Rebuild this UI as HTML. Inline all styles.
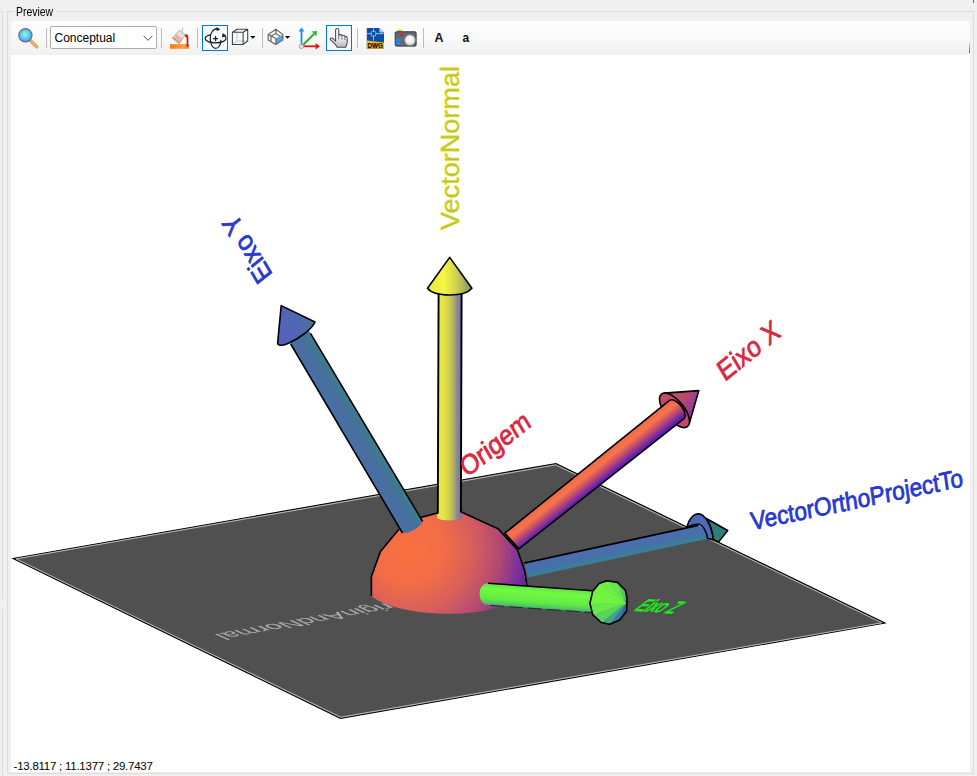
<!DOCTYPE html>
<html><head><meta charset="utf-8"><title>Preview</title>
<style>
html,body{margin:0;padding:0}
body{width:977px;height:776px;background:#f0f0f0;position:relative;overflow:hidden;font-family:"Liberation Sans",sans-serif;font-size:12px;color:#000}
.abs{position:absolute}
#grp{left:7px;top:11px;width:965px;height:761px;border:1px solid #dcdcdc}
#lbl{left:14px;top:4px;width:40px;height:16px;background:#f0f0f0;line-height:16px;padding-left:2px;font-size:12px;white-space:nowrap}
#lbl span{display:inline-block;transform:scaleX(.868);transform-origin:0 50%}
#lg1{left:-5px;top:11px;width:6px;height:586px;border:1px solid #dcdcdc}
#lg2{left:-5px;top:609px;width:6px;height:180px;border:1px solid #dcdcdc}
#tb{left:11px;top:21px;width:959px;height:34px;background:linear-gradient(#fdfdfd,#f9f9f9 50%,#f0f0f0);border-radius:3px 4px 0 0}
#cv{left:11px;top:55px;width:959px;height:717px;background:#fff}
.sep{width:1px;height:20px;top:28px;background:#bdbdbd}
#combo{left:50px;top:26px;width:105px;height:21px;border:1px solid #adadad;background:#fff;border-radius:2px}
#combo span{position:absolute;left:3.5px;top:4px;font-size:12px;line-height:14px}
.btn{width:24px;height:24px;top:25px;border:1px solid #0078d7;background:#f6f9fd}
#coord{left:13.6px;top:758.6px;font-size:11.5px;line-height:14px;letter-spacing:-0.25px;white-space:nowrap}
svg text{font-family:"Liberation Sans",sans-serif}
</style></head><body>
<div class="abs" id="lg1"></div><div class="abs" id="lg2"></div>
<div class="abs" id="grp"></div>
<div class="abs" id="lbl"><span>Preview</span></div>
<div class="abs" id="tb"></div>
<div class="abs" id="cv"></div>
<div class="abs sep" style="left:46px"></div>
<div class="abs" id="combo"><span>Conceptual</span></div>
<div class="abs sep" style="left:161px"></div>
<div class="abs sep" style="left:197px"></div>
<div class="abs btn" style="left:202px"></div>
<div class="abs sep" style="left:262px"></div>
<div class="abs btn" style="left:326px"></div>
<div class="abs sep" style="left:357px"></div>
<div class="abs sep" style="left:423px"></div>
<div class="abs" style="left:973px;top:0;width:1px;height:3px;background:#6a6a6a"></div>
<div class="abs" style="left:969px;top:41px;width:1px;height:12px;background:linear-gradient(rgba(90,90,90,0),#5a5a5a)"></div>
<svg class="abs" style="left:0;top:0" width="977" height="776" viewBox="0 0 977 776" font-family="Liberation Sans, sans-serif">
<defs>
<radialGradient id="imag" cx="25" cy="34.5" r="7" gradientUnits="userSpaceOnUse"><stop offset="0" stop-color="#84fcd4"/><stop offset=".6" stop-color="#62c8f0"/><stop offset="1" stop-color="#4c9cfc"/></radialGradient>
<linearGradient id="ibar" x1="170" y1="0" x2="189" y2="0" gradientUnits="userSpaceOnUse"><stop offset="0" stop-color="#f87c08"/><stop offset=".7" stop-color="#fca040"/><stop offset="1" stop-color="#f08830"/></linearGradient>
<linearGradient id="ihand" x1="0" y1="28" x2="0" y2="47" gradientUnits="userSpaceOnUse"><stop offset="0" stop-color="#ffffff"/><stop offset=".5" stop-color="#f4f4f4"/><stop offset="1" stop-color="#b8b8b8"/></linearGradient>
<radialGradient id="ilens" cx="409.6" cy="39.6" r="5.6" gradientUnits="userSpaceOnUse"><stop offset="0" stop-color="#ffffff"/><stop offset=".7" stop-color="#ececec"/><stop offset="1" stop-color="#c4c4c4"/></radialGradient>
</defs>
<!-- magnifier -->
<path d="M30.3,40.6 L36.8,46.9" stroke="#d08848" stroke-width="3.2" stroke-linecap="round"/>
<path d="M30.3,40.6 L36.8,46.9" stroke="#fcac58" stroke-width="2.2" stroke-linecap="round"/>
<circle cx="25.4" cy="35.3" r="6.6" fill="url(#imag)" stroke="#6c6c74" stroke-width="1.2"/>
<!-- combo chevron -->
<path d="M143.6,35.9 L148,40.3 L152.4,35.9" fill="none" stroke="#484848" stroke-width="1"/>
<!-- paint bucket -->
<rect x="170" y="44.1" width="18.8" height="4.7" fill="url(#ibar)"/>
<path d="M185.2,34.4 C188,34 188.6,36.5 188.4,39 L188.4,47 L186.6,47 L186.6,39 C186.6,37.5 186,36.5 184.6,36.4 Z" fill="#c8200c"/>
<path d="M179.3,30.1 L185.2,34.6 L179.2,43.8 L172.2,38.5 Z" fill="#eee0d2" stroke="#b4a494" stroke-width=".8" stroke-linejoin="round"/>
<path d="M176.3,34.3 L182.3,38.9 L179.2,43.6 L172.4,38.5 Z" fill="#d07868" opacity=".75"/>
<path d="M174.3,36.4 L180.6,41.3 M175.4,35.2 L181.6,40 M173.6,39.5 L176.6,34.6 M175.6,41 L178.6,36.1 M177.6,42.5 L180.6,37.6" stroke="#f4e4d8" stroke-width=".6"/>
<path d="M182.5,27.2 L182.5,34" stroke="#a8c0d0" stroke-width=".9"/>
<!-- orbit -->
<g fill="none" stroke="#1a1a1a" stroke-width="1.15" stroke-linecap="round">
<path d="M217.6,28.6 C213,28.6 210.2,33 210.2,38.6 C210.2,44 212.6,48.4 215.6,48.4 C218.6,48.4 220.9,44.6 220.9,40.2"/>
<path d="M223.9,34.8 C225.5,35.8 226,37.2 226,38.6 C226,41 221.4,42.8 215.6,42.8 C209.8,42.8 205.2,41 205.2,38.6 C205.2,37 207.2,35.6 210.2,34.9"/>
<path d="M213.4,38.6 L217.8,38.6 M215.6,36.4 L215.6,40.8"/>
</g>
<path d="M216.4,27 L220.2,29.2 L216.8,31.2 Z" fill="#1a1a1a"/>
<path d="M222.6,33 L226.2,36 L222,37.6 Z" fill="#1a1a1a"/>
<!-- wire cube -->
<g fill="none" stroke-linejoin="round">
<path d="M237,29.3 L237,41 L247.7,41 M237,41 L232.4,44.4" stroke="#c0c4c8" stroke-width=".9"/>
<path d="M232.4,32.3 L243.1,32.3 L243.1,44.4 L232.4,44.4 Z M232.4,32.3 L237,29.3 L247.7,29.3 L243.1,32.3 M247.7,29.3 L247.7,41 L243.1,44.4" stroke="#3c424a" stroke-width="1.05"/>
</g>
<path d="M250.2,35.9 L255.4,35.9 L252.8,38.7 Z" fill="#000"/>
<!-- iso box with blue face -->
<path d="M275.9,38.5 L282.8,34.4 L282.8,40 L275.9,44.6 Z" fill="#5aa2e4"/>
<g fill="none" stroke="#6e6e6e" stroke-width="1.25" stroke-linejoin="round">
<path d="M275.9,29.3 L282.8,34.4 L282.8,40 L275.9,44.6 L268.2,40 L268.2,34.4 Z"/>
<path d="M268.2,34.4 L275.9,38.5 L275.9,44.6 M275.9,29.3 L275.9,33.5 M275.9,33.5 L271,36 M275.9,33.5 L280,36.2 M271,36 L271,41.5"/>
</g>
<path d="M285,35.9 L290.2,35.9 L287.6,38.7 Z" fill="#000"/>
<!-- axes -->
<path d="M301.5,46 L301.5,30" stroke="#1c8cf4" stroke-width="1.8"/>
<path d="M298.6,31.4 L301.5,27.4 L304.4,31.4 Z" fill="#1c8cf4"/>
<path d="M302,46 L314,34" stroke="#20b020" stroke-width="1.8"/>
<path d="M311.6,31.4 L317,31 L316.4,36.2 Z" fill="#20c020"/>
<path d="M302,46.3 L316,46.3" stroke="#e81010" stroke-width="1.8"/>
<path d="M315.6,43.2 L320,46.3 L315.6,49.4 Z" fill="#e81010"/>
<circle cx="301.4" cy="46.4" r="2.2" fill="#e4e4e4" stroke="#9c9c9c" stroke-width=".9"/>
<!-- hand -->
<path d="M335.6,41.2 L335.6,30.2 C335.6,27.9 338.8,27.9 338.8,30.2 L338.8,35.4 C339.6,34.2 341.8,34.4 342,35.8 C342.8,34.8 344.8,35.2 344.9,36.6 C345.8,35.9 347.2,36.6 347.2,38 L347.2,42.6 C347.2,44.6 346,45.6 345.8,47.3 L337.2,47.3 C336.2,45 333.2,42.4 330.6,40 C329.6,38.8 330.8,37.4 332.4,38.2 Z" fill="url(#ihand)" stroke="#484848" stroke-width="1.05" stroke-linejoin="round"/>
<path d="M338.8,35.4 L338.8,39.4 M342,35.8 L342,39.6 M344.9,36.8 L344.9,40" stroke="#606060" stroke-width=".9" fill="none"/>
<!-- DWG -->
<path d="M366.8,28 L379.4,28 L384,32.6 L384,48.7 L366.8,48.7 Z" fill="#0a4ea6"/>
<path d="M379.4,28 L384,32.6 L379.4,32.6 Z" fill="#9cd0fc"/>
<path d="M366.8,40.4 L384,42.6 L384,48.7 L366.8,48.7 Z" fill="#f6b90c"/>
<g stroke="#8cc4f8" stroke-width="1" fill="none"><rect x="371.2" y="31.4" width="4.6" height="4.6" rx="1.2"/><path d="M373.5,28.4 L373.5,31.4 M373.5,36 L373.5,40.4 M367,33.7 L371.2,33.7 M375.8,33.7 L383.6,33.7"/></g>
<text x="367.4" y="48.1" font-size="7.2" font-weight="bold" fill="#141414" stroke="#141414" stroke-width=".25" textLength="15.4" lengthAdjust="spacingAndGlyphs">DWG</text>
<!-- camera -->
<path d="M397.4,31.8 L398.2,29.8 L401.8,29.8 L402.6,31.8 Z" fill="#d8c80c"/>
<rect x="395.2" y="31.8" width="20.9" height="14.3" rx="1.2" fill="#636a74" stroke="#33373d" stroke-width="1"/>
<rect x="399.8" y="33.9" width="3.8" height="1.9" fill="#f01818"/>
<rect x="396" y="39" width="4.6" height="2.1" fill="#1c8cf8"/>
<rect x="396" y="42.1" width="4.6" height="2.1" fill="#1c8cf8"/>
<circle cx="410" cy="40.1" r="5.7" fill="#9a9ea6"/>
<circle cx="410" cy="40.1" r="4.9" fill="url(#ilens)"/>
<!-- A a -->
<text x="434.6" y="41.7" font-size="12.4" font-weight="bold" fill="#141008">A</text>
<text x="462.6" y="41.7" font-size="12" font-weight="bold" fill="#141008">a</text>
<defs>
<filter id="fb" x="-10%" y="-10%" width="120%" height="120%"><feGaussianBlur stdDeviation="0.5"/></filter>
<clipPath id="gcl"><polygon points="606.9,580.7 617.5,582.4 625.3,590.2 627.1,598.4 626.7,611.1 619.7,620 609.7,624.2 601.2,622.5 592.7,614.7 589.9,603.3 592.7,591.3 599.1,583.5"/></clipPath>
<linearGradient id="gy" x1="439" y1="0" x2="461" y2="0" gradientUnits="userSpaceOnUse">
 <stop offset="0" stop-color="#e8e844"/><stop offset=".2" stop-color="#e4e444"/><stop offset=".42" stop-color="#d4d44c"/><stop offset=".62" stop-color="#b6b660"/><stop offset=".8" stop-color="#8e8e88"/><stop offset=".95" stop-color="#7a7aae"/><stop offset="1" stop-color="#7474b4"/></linearGradient>
<linearGradient id="gyc" x1="428" y1="0" x2="472" y2="0" gradientUnits="userSpaceOnUse">
 <stop offset="0" stop-color="#e6e640"/><stop offset=".35" stop-color="#f6f644"/><stop offset=".6" stop-color="#d8d84c"/><stop offset="1" stop-color="#8c8c70"/></linearGradient>
<linearGradient id="gby" x1="290.7" y1="344" x2="310.07" y2="332.55" gradientUnits="userSpaceOnUse">
 <stop offset="0" stop-color="#4a6ea6"/><stop offset=".55" stop-color="#466f9e"/><stop offset="1" stop-color="#3c7e8a"/></linearGradient>
<linearGradient id="gbyc" x1="278" y1="330" x2="314" y2="322" gradientUnits="userSpaceOnUse">
 <stop offset="0" stop-color="#5462bc"/><stop offset=".5" stop-color="#5066b4"/><stop offset="1" stop-color="#44749c"/></linearGradient>
<linearGradient id="grx" x1="505.2" y1="533.7" x2="518.0" y2="549.6" gradientUnits="userSpaceOnUse">
 <stop offset="0" stop-color="#f06a4c"/><stop offset=".3" stop-color="#f87448"/><stop offset=".6" stop-color="#c04c70"/><stop offset="1" stop-color="#5a1cb4"/></linearGradient>
<linearGradient id="grc" x1="668" y1="398" x2="696" y2="412" gradientUnits="userSpaceOnUse">
 <stop offset="0" stop-color="#c85064"/><stop offset=".5" stop-color="#b84870"/><stop offset="1" stop-color="#8036a0"/></linearGradient>
<linearGradient id="gbo" x1="524.1" y1="563.1" x2="527.5" y2="578.7" gradientUnits="userSpaceOnUse">
 <stop offset="0" stop-color="#4e6cb6"/><stop offset=".5" stop-color="#4670a8"/><stop offset="1" stop-color="#368494"/></linearGradient>
<linearGradient id="ggz" x1="488" y1="583.2" x2="486.4" y2="605.1" gradientUnits="userSpaceOnUse">
 <stop offset="0" stop-color="#5ee24a"/><stop offset=".25" stop-color="#72fa40"/><stop offset=".7" stop-color="#62ea46"/><stop offset=".9" stop-color="#4ec85e"/><stop offset="1" stop-color="#3ca080"/></linearGradient>
<radialGradient id="ggc" cx="600" cy="595" r="34" gradientUnits="userSpaceOnUse">
 <stop offset="0" stop-color="#6cf440"/><stop offset=".55" stop-color="#5ce048"/><stop offset=".8" stop-color="#44a878"/><stop offset="1" stop-color="#3068b0"/></radialGradient>
<radialGradient id="ghs" cx="409" cy="549" r="118" gradientUnits="userSpaceOnUse">
 <stop offset="0" stop-color="#fa7040"/><stop offset=".3" stop-color="#f26c46"/><stop offset=".55" stop-color="#d65e5c"/><stop offset=".78" stop-color="#b04874"/><stop offset=".92" stop-color="#7e3499"/><stop offset="1" stop-color="#6a2a9e"/></radialGradient>
</defs>
<polygon points="13,558.5 556,463.5 885,623 340.5,718.5" fill="#505050" stroke="#000" stroke-width="1.1" stroke-linejoin="miter"/>
<polygon points="16.2,558.9 555.7,464.9 881.8,622.8 340.8,717.2" fill="none" stroke="#c8c8c8" stroke-width="0.9"/>
<text transform="matrix(-0.25008 0.04551 -0.17878 -0.08140 405.00 599.50)" font-size="100" textLength="766.9" lengthAdjust="spacingAndGlyphs" fill="#d0d0d0" opacity=".72">OriginAndNormal</text>
<path d="M524.1,563.1 L698.3,525.4 C703,526 706.5,532 707.7,538.8 L527.7,577.6 Z" fill="url(#gbo)"/>
<path d="M524.1,563.1 L698.3,525.4" stroke="#000" stroke-width="1.6" fill="none"/>
<path d="M687.1,526.3 C689,519 693.5,513.7 698.4,513.7 C705,514 711.5,525 713.5,539.8 L707.7,538.6 C706.5,531 702.5,524.5 698,524.3 C695,524.3 692,525 689.7,526.2 Z" fill="#5068b8" stroke="#000" stroke-width="1.5" stroke-linejoin="round"/>
<path d="M706.4,518.5 L727.7,530.5 L718.7,541.9 L713.5,539.8 C712.5,531 710,523.5 706.4,518.5 Z" fill="#2f7f77" stroke="#000" stroke-width="1.5" stroke-linejoin="round"/>
<path d="M664.3,393.1 L698.8,390.6 L689.2,423.9 Z" fill="url(#grc)" stroke="#000" stroke-width="1.6" stroke-linejoin="round"/>
<ellipse cx="674.5" cy="410.3" rx="9.5" ry="20.8" transform="rotate(-38.9 674.5 410.3)" fill="#c24a68" stroke="#000" stroke-width="1.6"/>
<path d="M504.8,533.2 L669.5,400.3 A5.4,10.3 -38.9 0 1 683.3,419.2 L518.9,548.9 Z" fill="url(#grx)" stroke="#000" stroke-width="1.6" stroke-linejoin="round"/>
<path d="M371.4,596 L371.4,576.6 L380.3,551.7 L398.7,529.6 L420.8,517.6 L437.4,513 L461.3,512.1 L498.1,528.7 L517.5,549.9 L524.8,571 L526.7,584 L526.7,590 C520,603 487,613.8 449,613.8 C415,613.8 385,607 371.4,596 Z" fill="url(#ghs)"/>
<path d="M371.4,596 L371.4,576.6 L380.3,551.7 L398.7,529.6 L420.8,517.6 L437.4,513 L461.3,512.1 L498.1,528.7 L517.5,549.9 L524.8,571 L526.7,584 L526.7,590" fill="none" stroke="#000" stroke-width="1.6" stroke-linejoin="round"/>
<path d="M288.7,340.6 L308.5,329.9 L422.6,521.3 C421,527 409,534 402.5,533 Z" fill="url(#gby)"/>
<path d="M290.7,344 L402.5,533 M310.5,333.3 L422.6,521.3" stroke="#000" stroke-width="1.6" fill="none"/>
<path d="M281.2,305.6 L315,322 C312,329 300,338 289,343 C284,345.5 279.5,346 277.6,343.7 Z" fill="url(#gbyc)" stroke="#000" stroke-width="1.6" stroke-linejoin="round"/>
<path d="M438.2,293 L462.1,293 L461.4,518.5 C456,521 443,521 437.2,518.5 Z" fill="url(#gy)"/>
<path d="M438.6,293 L437.8,513.8 M461.6,293 L460.9,512.6" stroke="#000" stroke-width="1.9" fill="none"/>
<path d="M449.7,257.4 L471.9,288.3 C468,293 458,295 449.7,295 C441,295 431,293 427.5,288.3 Z" fill="url(#gyc)" stroke="#000" stroke-width="1.6" stroke-linejoin="round"/>
<path d="M488,583.2 L592.7,590.7 L592,612.3 L488,605 C483,605 479.6,600 479.6,594 C479.6,588 483,583.2 488,583.2 Z" fill="url(#ggz)"/>
<path d="M488,583.2 L592.7,590.7" stroke="#000" stroke-width="1.5" fill="none"/>
<path d="M490,605.4 L592,612.5" stroke="#102010" stroke-width="1" fill="none" stroke-dasharray="14 5" opacity=".8"/>
<g clip-path="url(#gcl)"><g filter="url(#fb)">
<polygon points="606.9,580.7 617.5,582.4 625.3,603.3" fill="#66e64a" stroke="#66e64a" stroke-width=".6"/>
<polygon points="617.5,582.4 625.3,590.2 625.3,603.3" fill="#58c866" stroke="#58c866" stroke-width=".6"/>
<polygon points="625.3,590.2 627.1,598.4 625.3,603.3" fill="#48a08c" stroke="#48a08c" stroke-width=".6"/>
<polygon points="627.1,598.4 626.7,611.1 625.3,603.3" fill="#2e5cb4" stroke="#2e5cb4" stroke-width=".6"/>
<polygon points="626.7,611.1 619.7,620 625.3,603.3" fill="#2e62b2" stroke="#2e62b2" stroke-width=".6"/>
<polygon points="619.7,620 609.7,624.2 625.3,603.3" fill="#367ca6" stroke="#367ca6" stroke-width=".6"/>
<polygon points="609.7,624.2 601.2,622.5 625.3,603.3" fill="#44a486" stroke="#44a486" stroke-width=".6"/>
<polygon points="601.2,622.5 592.7,614.7 625.3,603.3" fill="#58d45a" stroke="#58d45a" stroke-width=".6"/>
<polygon points="592.7,614.7 589.9,603.3 625.3,603.3" fill="#66ea48" stroke="#66ea48" stroke-width=".6"/>
<polygon points="589.9,603.3 592.7,591.3 625.3,603.3" fill="#70f440" stroke="#70f440" stroke-width=".6"/>
<polygon points="592.7,591.3 599.1,583.5 625.3,603.3" fill="#70f440" stroke="#70f440" stroke-width=".6"/>
<polygon points="599.1,583.5 606.9,580.7 625.3,603.3" fill="#6cee44" stroke="#6cee44" stroke-width=".6"/>
</g></g>
<polygon points="606.9,580.7 617.5,582.4 625.3,590.2 627.1,598.4 626.7,611.1 619.7,620 609.7,624.2 601.2,622.5 592.7,614.7 589.9,603.3 592.7,591.3 599.1,583.5" fill="none" stroke="#000" stroke-width="1.6" stroke-linejoin="round"/>
<text transform="matrix(0.00000 -0.26829 0.25873 0.00000 459.30 230.00)" font-size="100" textLength="611.3" lengthAdjust="spacingAndGlyphs" fill="#bcbc3c" stroke="#e0e018" stroke-width="0.7" vector-effect="non-scaling-stroke" stroke-linejoin="round">VectorNormal</text>
<text transform="matrix(-0.12941 -0.21764 0.21076 -0.16861 272.90 274.60)" font-size="100" textLength="289.0" lengthAdjust="spacingAndGlyphs" fill="#2a40c0" stroke="#1c2ce4" stroke-width="0.7" vector-effect="non-scaling-stroke" stroke-linejoin="round">Eixo Y</text>
<text transform="matrix(0.19791 -0.16020 0.14244 0.23983 724.70 381.90)" font-size="100" textLength="289.0" lengthAdjust="spacingAndGlyphs" fill="#c83050" stroke="#ec1830" stroke-width="0.7" vector-effect="non-scaling-stroke" stroke-linejoin="round">Eixo X</text>
<text transform="matrix(0.19949 -0.16014 0.13663 0.23111 467.10 478.10)" font-size="100" textLength="327.8" lengthAdjust="spacingAndGlyphs" fill="#c83050" stroke="#ec1830" stroke-width="0.7" vector-effect="non-scaling-stroke" stroke-linejoin="round">Origem</text>
<text transform="matrix(0.21912 -0.04550 0.03488 0.25146 752.10 530.20)" font-size="100" textLength="967.0" lengthAdjust="spacingAndGlyphs" fill="#2a40c0" stroke="#1c2ce4" stroke-width="0.7" vector-effect="non-scaling-stroke" stroke-linejoin="round">VectorOrthoProjectTo</text>
<text transform="matrix(0.13903 0.01023 -0.20349 0.16134 633.20 610.40)" font-size="100" textLength="283.4" lengthAdjust="spacingAndGlyphs" fill="#18f018" stroke="#18f018" stroke-width="0.9" vector-effect="non-scaling-stroke" stroke-linejoin="round">Eixo Z</text>
</svg>
<div class="abs" id="coord">-13.8117 ; 11.1377 ; 29.7437</div>
</body></html>
